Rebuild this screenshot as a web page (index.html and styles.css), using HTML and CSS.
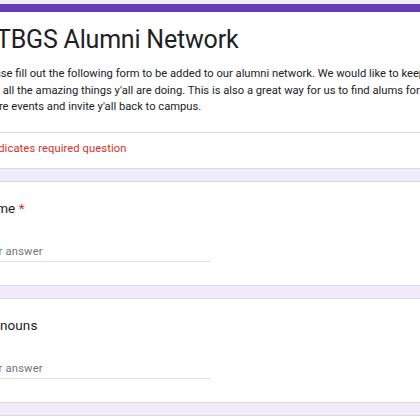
FILE: index.html
```html
<!DOCTYPE html>
<html lang="en">
<head>
<meta charset="utf-8">
<title>TBGS Alumni Network</title>
<link rel="stylesheet" href="styles.css">
</head>
<body>
<div class="form">
  <section class="card header-card">
    <div class="header-main">
      <h1 class="title">TBGS Alumni Network</h1>
      <p class="desc">Please fill out the following form to be added to our alumni network. We would like to keep up with all the amazing things y'all are doing. This is also a great way for us to find alums for future events and invite y'all back to campus.</p>
    </div>
    <div class="required-note">* Indicates required question</div>
  </section>

  <section class="card question">
    <div class="q-label">Name <span class="req">*</span></div>
    <div class="answer">Your answer</div>
  </section>

  <section class="card question">
    <div class="q-label">Pronouns</div>
    <div class="answer">Your answer</div>
  </section>

  <section class="card question">
    <div class="q-label">Email <span class="req">*</span></div>
    <div class="answer">Your answer</div>
  </section>
</div>
</body>
</html>
```
FILE: styles.css
```css
html, body {
  margin: 0;
  padding: 0;
  overflow: hidden;
}
body {
  background: #f0ebf8;
  font-family: Roboto, "Liberation Sans", sans-serif;
  color: #202124;
}
.form {
  margin: 0 -46px;
  padding-top: 4px;
  display: flex;
  flex-direction: column;
  gap: 12px;
}
.card {
  background: #fff;
  border: 1px solid #dadce0;
  border-radius: 8px;
}
.header-card {
  border-top: 8px solid #673ab7;
}
.header-main {
  padding: 10px 24px 16px;
}
.title {
  margin: 0 0 8px 0;
  padding-left: 17px;
  font-weight: 400;
  font-size: 25px;
  line-height: 36px;
  letter-spacing: -0.2px;
  color: #202124;
}
.desc {
  margin: 0;
  font-size: 11.2px;
  line-height: 16.5px;
  letter-spacing: 0;
}
.required-note {
  border-top: 1px solid #dadce0;
  padding: 8px 24px 11px 26px;
  font-size: 11.2px;
  line-height: 16px;
  color: #d93025;
  letter-spacing: 0.1px;
}
.question {
  padding: 16px 24px 23px 24px;
  min-height: 64px;
}
.q-label {
  font-size: 13.5px;
  line-height: 20px;
  letter-spacing: 0.1px;
}
.req {
  color: #d93025;
}
.answer {
  margin-top: 26px;
  width: 232px;
  font-size: 11.2px;
  line-height: 16px;
  color: #70757a;
  letter-spacing: 0.2px;
  padding-bottom: 1px;
  border-bottom: 1px solid #e0e0e0;
}
```
